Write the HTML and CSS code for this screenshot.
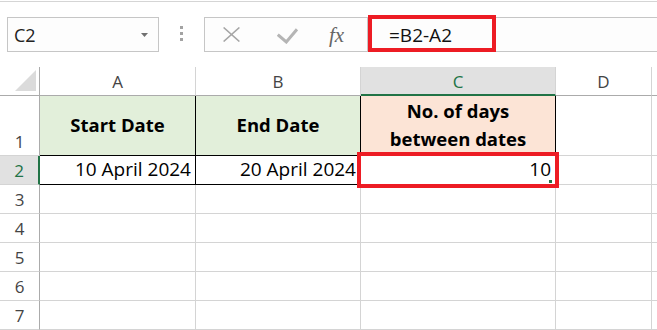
FILE: index.html
```html
<!DOCTYPE html>
<html>
<head>
<meta charset="utf-8">
<link rel="stylesheet" href="styles.css">
</head>
<body>
<div class="app">
  <div class="toolbar">
    <div class="namebox">
      <span class="namebox-text">C2</span>
      <svg class="caret" width="7" height="4" viewBox="0 0 7 4"><path d="M0 0H7L3.5 4Z" fill="#707070"/></svg>
    </div>
    <div class="grip"><i></i><i></i><i></i></div>
    <div class="fbar">
      <div class="fbtns">
        <svg class="ic-x" width="17" height="15" viewBox="0 0 17 15"><path d="M0.6 0.5L16.4 14.5M16.4 0.5L0.6 14.5" stroke="#a6a6a6" stroke-width="1.6" fill="none"/></svg>
        <svg class="ic-check" width="21" height="16" viewBox="0 0 21 16"><path d="M0.8 6.6L9.3 14L20 1.3" stroke="#b5b5b5" stroke-width="3" fill="none"/></svg>
        <span class="fx">fx</span>
      </div>
      <div class="finput">
        <span class="ftext">=B2-A2</span>
        <div class="hl hl-formula"></div>
      </div>
    </div>
  </div>

  <div class="sheet">
    <div class="c corner"><svg width="39" height="28" viewBox="0 0 39 28"><path d="M15 24H36V3Z" fill="#dbdbdb"/></svg></div>
    <div class="c ch">A</div>
    <div class="c ch">B</div>
    <div class="c ch sel">C</div>
    <div class="c ch">D</div>
    <div class="c ch"></div>

    <div class="c rh">1</div>
    <div class="c d green hd">Start Date</div>
    <div class="c d green hd">End Date</div>
    <div class="c d peach hd">No. of days<br>between dates</div>
    <div class="c"></div>
    <div class="c"></div>

    <div class="c rh sel">2</div>
    <div class="c d num">10 April 2024</div>
    <div class="c d num">20 April 2024</div>
    <div class="c d num active">10<div class="hl hl-cell"></div><div class="handle"></div></div>
    <div class="c"></div>
    <div class="c"></div>

    <div class="c rh">3</div><div class="c"></div><div class="c"></div><div class="c"></div><div class="c"></div><div class="c"></div>
    <div class="c rh">4</div><div class="c"></div><div class="c"></div><div class="c"></div><div class="c"></div><div class="c"></div>
    <div class="c rh">5</div><div class="c"></div><div class="c"></div><div class="c"></div><div class="c"></div><div class="c"></div>
    <div class="c rh">6</div><div class="c"></div><div class="c"></div><div class="c"></div><div class="c"></div><div class="c"></div>
    <div class="c rh">7</div><div class="c"></div><div class="c"></div><div class="c"></div><div class="c"></div><div class="c"></div>
  </div>
</div>
</body>
</html>
```

FILE: styles.css
```css
html, body {
  margin: 0;
  padding: 0;
  background: #ffffff;
}

body {
  font-family: "Open Sans", "Noto Sans", sans-serif;
  overflow: hidden;
}

.app {
  width: 657px;
  height: 330px;
  overflow: hidden;
}

/* ---------- formula toolbar ---------- */
.toolbar {
  box-sizing: border-box;
  height: 66px;
  margin-top: 1px;
  border-top: 1px solid #d5d5d5;
  padding: 15px 0 0 7px;
  display: flex;
  align-items: flex-start;
}

.namebox {
  box-sizing: border-box;
  width: 152px;
  height: 35px;
  border: 1px solid #c6c6c6;
  background: #fdfdfd;
  display: flex;
  align-items: center;
  justify-content: space-between;
  padding: 0 10px 0 6px;
}

.namebox-text {
  font-size: 18px;
  color: #222;
  line-height: 22px;
}

.caret {
  display: block;
}

.grip {
  margin: 9px 0 0 21px;
  display: flex;
  flex-direction: column;
  gap: 3px;
}

.grip i {
  display: block;
  width: 3px;
  height: 3px;
  background: #a3a3a3;
}

.fbar {
  box-sizing: border-box;
  flex: 1;
  height: 35px;
  margin-left: 21px;
  border: 1px solid #c6c6c6;
  border-right: none;
  background: #fdfdfd;
  display: flex;
}

.fbtns {
  width: 162px;
  display: flex;
  align-items: center;
}

.ic-x {
  display: block;
  margin-left: 18px;
}

.ic-check {
  display: block;
  margin-left: 37px;
  margin-top: 2px;
}

.fx {
  margin-left: 31px;
  font-family: "Liberation Serif", "DejaVu Serif", serif;
  font-style: italic;
  font-size: 21px;
  color: #666;
  line-height: 22px;
}

.finput {
  flex: 1;
  position: relative;
  border-left: 1px solid #c6c6c6;
  display: flex;
  align-items: center;
  padding-left: 21px;
}

.ftext {
  font-size: 19px;
  color: #111;
  line-height: 24px;
}

.hl {
  position: absolute;
  box-sizing: border-box;
  border: 4px solid #ed1c24;
  z-index: 3;
}

.hl-formula {
  left: 0;
  top: -3px;
  width: 128px;
  height: 37px;
}

/* ---------- sheet grid ---------- */
.sheet {
  display: grid;
  grid-template-columns: 40px 156px 165px 195px 96px 1fr;
  grid-template-rows: 29px 60px 29px repeat(5, 29px);
}

.c {
  box-sizing: border-box;
  border-right: 1px solid #d4d4d4;
  border-bottom: 1px solid #d4d4d4;
  display: flex;
  align-items: flex-end;
  padding: 0 4px 3px;
  font-size: 19px;
  line-height: 24px;
  color: #000;
  white-space: nowrap;
}

.corner {
  padding: 0;
  border-right-color: #ababab;
  border-bottom-color: #ababab;
  align-items: flex-start;
}

.corner svg {
  display: block;
}

.ch {
  justify-content: center;
  padding: 0 0 3px;
  font-size: 17px;
  line-height: 20px;
  color: #444;
  border-bottom-color: #ababab;
}

.ch.sel {
  background: #e1e1e1;
  color: #217346;
  border-bottom: 2px solid #217346;
  padding-bottom: 2px;
}

.rh {
  justify-content: center;
  padding: 0 0 3px;
  font-size: 17px;
  line-height: 20px;
  color: #444;
  border-right-color: #ababab;
}

.rh.sel {
  background: #e1e1e1;
  color: #217346;
  border-right: 2px solid #217346;
}

.d {
  border-right-color: #000;
  border-bottom-color: #000;
}

.green {
  background: #e2efda;
}

.peach {
  background: #fce4d6;
}

.hd {
  justify-content: center;
  align-items: center;
  text-align: center;
  font-weight: 700;
  font-size: 18.5px;
  line-height: 28px;
  padding: 0 0 1px;
}

.num {
  justify-content: flex-end;
}

.active {
  position: relative;
}

.hl-cell {
  left: -4px;
  top: -4px;
  width: 202px;
  height: 36px;
}

.handle {
  position: absolute;
  right: 3px;
  bottom: 1px;
  width: 3px;
  height: 3px;
  background: #217346;
  z-index: 4;
}
```
